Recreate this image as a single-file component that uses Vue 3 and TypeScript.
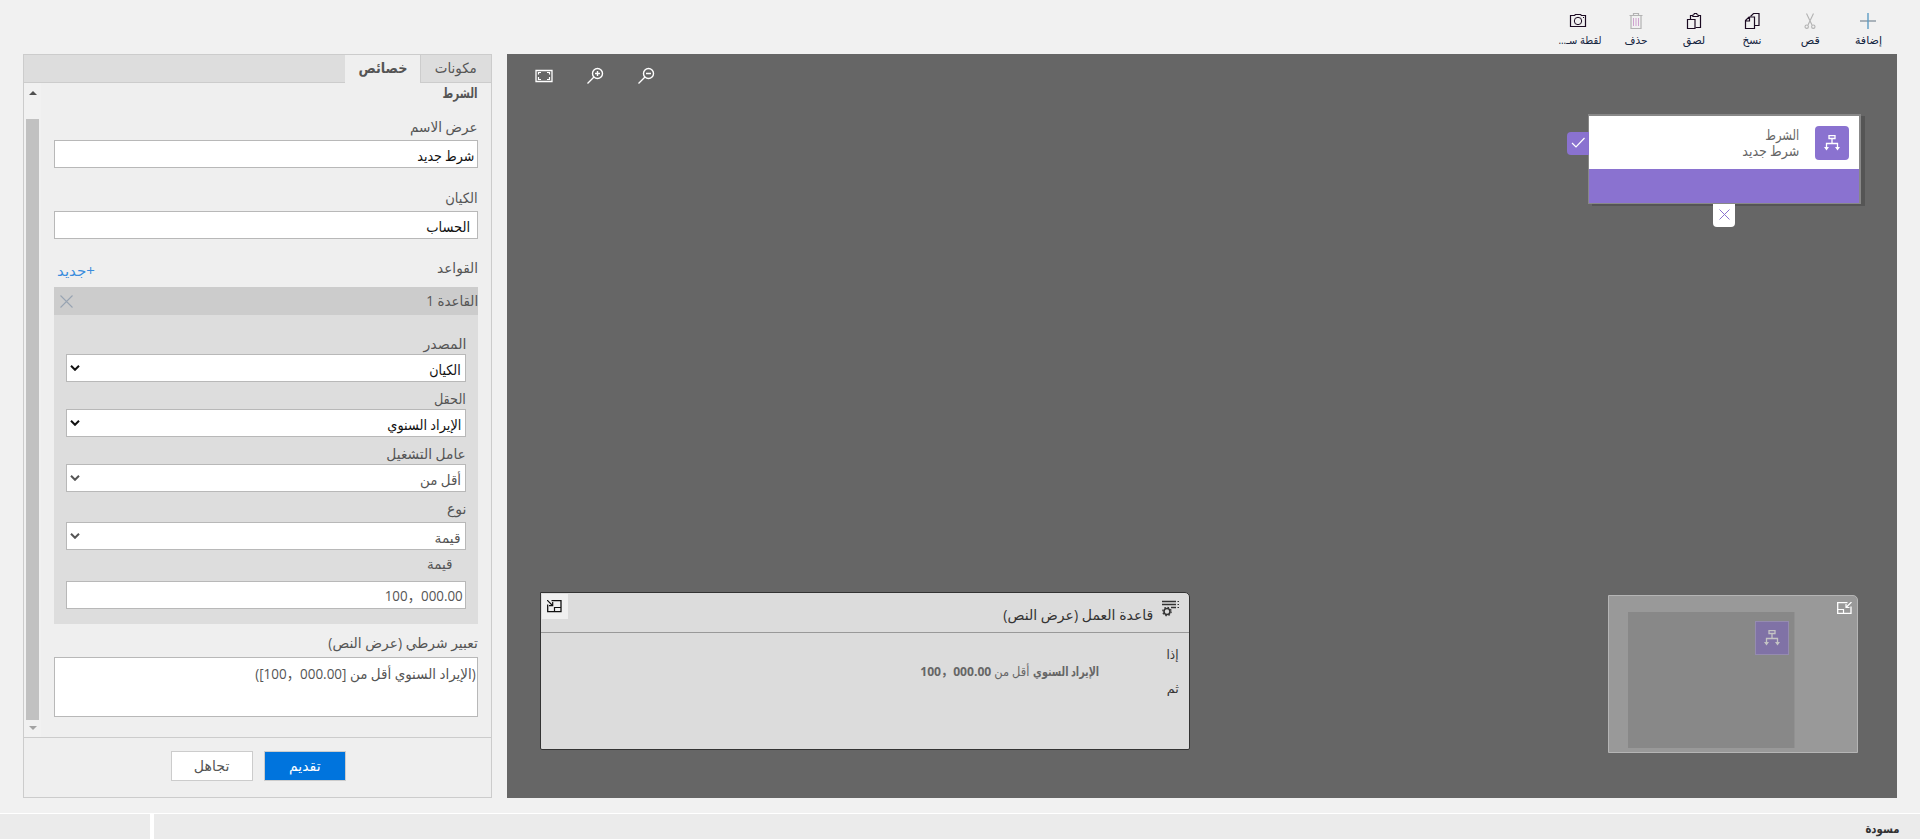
<script setup lang="ts">
import type { Directive } from 'vue'

/* Condenses or widens a label horizontally so that it takes the given width. */
const vFit: Directive<HTMLElement, number> = {
  mounted(el, { value }) {
    const width = el.getBoundingClientRect().width
    if (width > 0) el.style.transform = `scaleX(${(value / width).toFixed(4)})`
  },
}

interface Tool { label: string; icon: string; width: number }
const tools: Tool[] = [
  { label: 'إضافة', icon: 'add', width: 27 },
  { label: 'قص', icon: 'cut', width: 19 },
  { label: 'نسخ', icon: 'copy', width: 19 },
  { label: 'لصق', icon: 'paste', width: 22.5 },
  { label: 'حذف', icon: 'delete', width: 23 },
  { label: 'لقطة سـ...', icon: 'camera', width: 43 },
]

interface Select { label: string; labelWidth: number; value: string; width: number; muted: boolean }
const selects: Select[] = [
  { label: 'المصدر', labelWidth: 43, value: 'الكيان', width: 31.5, muted: false },
  { label: 'الحقل', labelWidth: 32, value: 'الإيراد السنوي', width: 74, muted: false },
  { label: 'عامل التشغيل', labelWidth: 79.5, value: 'أقل من', width: 41, muted: true },
  { label: 'نوع', labelWidth: 19.5, value: 'قيمة', width: 26, muted: true },
]
const amount = '100，000.00'
</script>

<template>
  <div class="app" dir="rtl">
    <header class="toolbar">
      <div v-for="t in tools" :key="t.icon" class="tool">
        <svg class="tool-icon" viewBox="0 0 18 18" fill="none">
          <g v-if="t.icon === 'add'">
            <path d="M1 9h16" stroke="#a9b2ba" stroke-width="2" />
            <path d="M9 1v16" stroke="#5d9cc4" stroke-width="1.4" />
          </g>
          <g v-else-if="t.icon === 'cut'" stroke="#b3b3b3" stroke-width="1.1">
            <path d="M5.5 1.5l5.5 11.5M12.5 1.5L7 13" />
            <circle cx="5.7" cy="14.7" r="1.7" /><circle cx="12.3" cy="14.7" r="1.7" />
          </g>
          <g v-else-if="t.icon === 'copy'" stroke="#1b0a22" stroke-width="1.2">
            <path d="M7.5 4.5l3-3h5.5v12h-4" />
            <path d="M2.500 8.500l3.500-3.500h5.500v11.500h-9zM6.500 5v4H2.500" />
          </g>
          <g v-else-if="t.icon === 'paste'" stroke="#1b0a22" stroke-width="1.2">
            <path d="M5.500 7.500v-4h2.500M13 3.500h2.500v12h-5" />
            <path d="M7.500 4.500h6v-1.500h-1.500v-1.500h-3v1.500h-1.500z" stroke-width="1" />
            <path d="M2.500 7.500h7.500v9h-7.500z" />
          </g>
          <g v-else-if="t.icon === 'delete'" stroke="#b3b3b3">
            <path d="M2.5 3.5h13M6.5 3.5v-2h5v2M4 3.5v13h10v-13" stroke-width="1.2" />
            <path d="M6.5 6v8M9 6v8M11.5 6v8" stroke="#cfa3cf" />
          </g>
          <g v-else stroke="#1b0a22">
            <path d="M1.5 3.500h4l1-1h5l1 1h4v11h-15z" stroke-width="1.200" /><circle cx="9" cy="9" r="3.700" />
            <path d="M14 5.500h1" />
          </g>
        </svg>
        <span v-fit="t.width" class="fit center tool-label" :class="t.icon">{{ t.label }}</span>
      </div>
    </header>

    <main class="main">
      <section class="canvas">
        <div class="zoom-tools">
          <svg width="18" height="16" viewBox="0 0 18 16" fill="none" stroke="#fff">
            <path d="M1 3.500h16v11H1z" stroke-width="1.300" /><path d="M6 5.500H3.500v2M3.500 10v2.500H6M12 5.500h2.500v2M14.500 10v2.500H12" stroke-width="1.200" />
          </svg>
          <svg width="18" height="18" viewBox="0 0 18 18" fill="none" stroke="#fff" stroke-width="1.400">
            <circle cx="11.500" cy="6.500" r="5" /><path d="M8 10l-6.500 6.500M9 6.500h5M11.500 4v5" />
          </svg>
          <svg width="18" height="18" viewBox="0 0 18 18" fill="none" stroke="#fff" stroke-width="1.400">
            <circle cx="11.500" cy="6.500" r="5" /><path d="M8 10l-6.500 6.500M9 6.500h5" />
          </svg>
        </div>

        <div class="node">
          <div class="node-head">
            <div class="node-icon">
              <svg width="16" height="16" viewBox="0 0 16 16" fill="none" stroke="#fff">
                <path d="M5 .5h6v3H5zM8 4v4.500M2.500 13V8.500h11V13" stroke-width="1.300" />
                <path d="M0 12h5l-2.500 3.500zM11 12h5l-2.500 3.500z" fill="#fff" stroke="none" />
              </svg>
            </div>
            <div class="node-text">
              <div><span v-fit="34" class="fit">الشرط</span></div>
              <div><span v-fit="57" class="fit">شرط جديد</span></div>
            </div>
          </div>
          <div class="node-body"></div>
          <div class="node-yes">
            <svg width="14" height="12" viewBox="0 0 14 12" fill="none" stroke="#fff" stroke-width="1.200"><path d="M1 6l4 4L13.500 1" /></svg>
          </div>
          <div class="node-no">
            <svg width="11" height="11" viewBox="0 0 11 11" stroke="#8a72d0"><path d="M.5.5l10 10M10.500.5l-10 10" /></svg>
          </div>
        </div>

        <div class="rule-view">
          <div class="rule-title">
            <svg class="rule-icon" width="18" height="18" viewBox="0 0 18 18" fill="none" stroke="#333">
              <path d="M0 2.500h14M0 5.500h14M9 8.500h5" stroke-width="1.300" />
              <path d="M15.500 2.500h1.500M15.500 5.500h1.500M15.500 8.500h1.500" stroke-width="1.200" />
              <circle cx="5" cy="12.500" r="3" stroke-width="1.600" />
              <circle cx="5" cy="12.500" r="4.200" stroke-width="1.200" stroke-dasharray="1.600 1.700" />
            </svg>
            <span v-fit="150" class="fit">قاعدة العمل (عرض النص)</span>
          </div>
          <div class="rule-text">
            <div class="rule-key"><span v-fit="12" class="fit">إذا</span></div>
            <div class="rule-clause">
              <div class="field-name"><b v-fit="66" class="fit">الإيراد السنوي</b></div>
              <div class="operator"><span v-fit="35" class="fit">أقل من</span></div>
              <div class="operand"><b v-fit="71" class="fit">{{ amount }}</b></div>
            </div>
            <div class="rule-key"><span v-fit="12" class="fit">ثم</span></div>
          </div>
          <div class="rule-min">
            <svg width="15" height="13" viewBox="0 0 15 13" fill="none" stroke="#111">
              <path d="M4.500.7h9.500v11H.7V4.500" stroke-width="1.300" /><path d="M7.500 11.500v-4h6.500M0 0l5.500 5.500M5.700 2v3.700H2" stroke-width="1.200" />
            </svg>
          </div>
        </div>

        <div class="minimap">
          <svg class="minimap-toggle" width="15" height="12" viewBox="0 0 15 12" fill="none" stroke="#fff">
            <path d="M10.500.7H.7v10.600h13.300V4.500" stroke-width="1.300" /><path d="M.5 7.500h6v4M14.500 0L9 5.500M9 2v3.500h3.500" stroke-width="1.200" />
          </svg>
          <div class="minimap-area">
            <div class="minimap-node">
              <svg width="16" height="16" viewBox="0 0 16 16" fill="none" stroke="#c4c4c4">
                <path d="M5 .5h6v3H5zM8 4v4.500M2.500 13V8.500h11V13" stroke-width="1.300" />
                <path d="M0 12h5l-2.500 3.500zM11 12h5l-2.500 3.500z" fill="#c4c4c4" stroke="none" />
              </svg>
            </div>
          </div>
        </div>
      </section>

      <aside class="panel">
        <nav class="tabs">
          <div class="tab"><span v-fit="42" class="fit">مكونات</span></div>
          <div class="tab active"><span v-fit="49" class="fit">خصائص</span></div>
          <div class="tab-rest"></div>
        </nav>
        <div class="scroller">
          <div class="form">
            <div class="row title"><b v-fit="35" class="fit">الشرط</b></div>
            <div class="row name-label"><span v-fit="67.5" class="fit">عرض الاسم</span></div>
            <div class="box name"><span v-fit="57" class="fit">شرط جديد</span></div>
            <div class="row entity-label"><span v-fit="32.5" class="fit">الكيان</span></div>
            <div class="box entity"><span v-fit="44" class="fit">الحساب</span></div>
            <div class="row rules-label">
              <span v-fit="41" class="fit">القواعد</span>
              <a v-fit="38" class="fit left new">+جديد</a>
            </div>
            <div class="rule">
              <div class="rule-head">
                <span v-fit="52" class="fit">القاعدة 1</span>
                <svg width="13" height="13" viewBox="0 0 13 13" stroke="#98a4b2" stroke-width="1.100"><path d="M.5.5l12 12M12.500.5l-12 12" /></svg>
              </div>
              <div class="rule-fields">
                <div v-for="s in selects" :key="s.label" class="field">
                  <div class="row"><span v-fit="s.labelWidth" class="fit">{{ s.label }}</span></div>
                  <div class="box select" :class="{ muted: s.muted }">
                    <span v-fit="s.width" class="fit">{{ s.value }}</span>
                    <svg width="10" height="6" viewBox="0 0 10 6" fill="none" stroke="currentColor" stroke-width="2"><path d="M1 .8l4 4 4-4" /></svg>
                  </div>
                </div>
                <div class="row value-label"><span v-fit="25.5" class="fit">قيمة</span></div>
                <div class="box value muted"><span v-fit="78" class="fit">{{ amount }}</span></div>
              </div>
            </div>
            <div class="row expr-label"><span v-fit="149.5" class="fit">تعبير شرطي (عرض النص)</span></div>
            <div class="box expr muted"><span v-fit="220.5" class="fit">(الإيراد السنوي أقل من [{{ amount }}])</span></div>
          </div>
          <div class="scrollbar">
            <div class="arrow up"></div>
            <div class="thumb"></div>
            <div class="arrow down"></div>
          </div>
        </div>
        <div class="actions">
          <button class="btn primary"><span v-fit="31.5" class="fit center">تقديم</span></button>
          <button class="btn"><span v-fit="35.5" class="fit center">تجاهل</span></button>
        </div>
      </aside>
    </main>

    <footer class="status">
      <div class="status-main"><b v-fit="34" class="fit">مسودة</b></div>
      <div class="status-side"></div>
    </footer>
  </div>
</template>

<style>
html, body { margin: 0; background: #f1f1f1; overflow: hidden; }
</style>

<style scoped>
* { box-sizing: border-box; }
.app {
  width: 1920px; height: 839px; display: flex; flex-direction: column;
  background: #f1f1f1; color: #555; overflow: hidden;
  font: 14px/18px "Open Sans", "DejaVu Sans", "Noto Sans CJK SC", sans-serif;
}
svg { display: block; flex: none; }
.fit { display: inline-block; white-space: nowrap; transform-origin: right center; flex: none; }
.fit.center { transform-origin: center; }
.fit.left { transform-origin: left center; }

.toolbar { height: 54px; display: flex; padding: 12px 23px 0 0; flex: none; }
.tool { width: 58px; display: flex; flex-direction: column; align-items: center; color: #14243f; }
.tool-icon { width: 18px; height: 18px; }
.tool-label { font-size: 11px; line-height: 14px; margin-top: 3px; }
.tool-label.camera { margin-right: -4px; }

.main { height: 744px; display: flex; padding: 0 23px; justify-content: space-between; flex: none; }
.canvas { width: 1390px; background: #666; position: relative; }
.zoom-tools { direction: ltr; display: flex; align-items: flex-start; gap: 33px; padding: 13px 0 0 28px; }

.node {
  position: absolute; left: 1081px; top: 60px; width: 273px; height: 90px;
  border: 1px solid #888; border-top-width: 2px; border-right-width: 2px; box-shadow: 4px 2px 0 #555;
}
.node-head { height: 53px; background: #fff; display: flex; align-items: center; padding-right: 10px; gap: 16px; }
.node-icon { width: 34px; height: 34px; border-radius: 4px; background: #8a72d0; display: flex; align-items: center; justify-content: center; }
.node-text { line-height: 16px; color: #666; }
.node-body { height: 34px; background: #8a72d0; }
.node-yes {
  position: absolute; left: -22px; top: 16px; width: 22px; height: 23px; background: #8a72d0;
  border-radius: 4px 0 0 4px; display: flex; align-items: center; justify-content: center; padding: 0 1px 2px 0;
}
.node-no {
  position: absolute; left: 124px; top: 88px; width: 22px; height: 23px; background: #fff;
  border-radius: 0 0 4px 4px; display: flex; align-items: center; justify-content: center; padding-bottom: 2px;
}

.rule-view {
  position: absolute; left: 33px; top: 538px; width: 650px; height: 158px;
  background: #dcdcdc; border: 1px solid #333; border-radius: 0 5px 2px 2px; color: #333;
}
.rule-title { height: 40px; border-bottom: 1px solid #999; display: flex; gap: 9px; padding: 6px 9px 0 0; }
.rule-title .fit { margin-top: 7px; }
.rule-text { padding: 13px 10px 0 0; font-size: 12.5px; line-height: 17px; }
.rule-clause { display: flex; padding-right: 80px; color: #666; }
.field-name { width: 70px; }
.operator { width: 38px; }
.operand { width: 71px; }
.rule-min { position: absolute; left: 1px; top: 1px; width: 26px; height: 25px; background: #f0f0f0; padding: 6px; }

.minimap {
  position: absolute; left: 1101px; top: 541px; width: 250px; height: 158px;
  background: #999; border: 1px solid #b5b5b5; border-radius: 0 5px 0 0; padding: 16px 62px 0 0;
}
.minimap-toggle { position: absolute; right: 5px; top: 6px; }
.minimap-area { width: 167px; height: 136px; background: #888; padding: 9px 5px; border-right: 1px solid #919191; }
.minimap-node { width: 34px; height: 34px; background: #8072a6; border: 1px solid #958bb0; display: flex; align-items: center; justify-content: center; }

.panel { width: 469px; border: 1px solid #ccc; background: #efefef; display: flex; flex-direction: column; }
.tabs { height: 28px; display: flex; flex: none; }
.tab { width: 71px; padding: 4px 14px 0 0; background: #ddd; border: solid #ccc; border-width: 0 0 1px 1px; }
.tab.active { width: 75px; padding-right: 13px; background: #efefef; border: 0; font-weight: 700; }
.tab-rest { flex: 1; background: #ddd; border-bottom: 1px solid #ccc; }
.scroller { height: 654px; display: flex; justify-content: space-between; }
.form { width: 437px; padding-right: 13px; }
.row { height: 18px; line-height: 16px; display: flex; }
.box { height: 28px; background: #fff; border: 1px solid #b8b8b8; display: flex; color: #111; line-height: 28px; }
.box.muted { color: #555; }
.title { margin-top: 2px; }
.name-label { margin-top: 16px; }
.name { margin-top: 3px; padding-right: 3px; line-height: 30px; }
.entity-label { margin-top: 22px; }
.entity { margin-top: 3px; padding-right: 7px; line-height: 29px; }
.rules-label { margin-top: 21px; justify-content: space-between; padding-left: 3px; }
.new { color: #3a8ddd; padding-top: 3px; }
.rule { margin-top: 9px; height: 337px; background: #ddd; }
.rule-head { height: 28px; background: #ccc; display: flex; justify-content: space-between; align-items: center; padding-left: 6px; }
.rule-fields { padding: 21px 12px 0; }
.field { height: 55px; }
.field:nth-child(4) { height: 58px; }
.field:nth-child(4) .box { margin-top: 3px; }
.select { padding: 0 4px 0 3px; justify-content: space-between; line-height: 29px; }
.select svg { margin-top: 10px; }
.value-label { margin-top: -3px; padding-right: 13px; }
.value { margin-top: 7px; padding-right: 2px; }
.expr-label { margin-top: 11px; }
.expr { margin-top: 4px; height: 60px; padding-right: 1px; line-height: 32px; }
.scrollbar { width: 17px; background: #f1f1f1; display: flex; flex-direction: column; padding: 8px 2px 0; }
.thumb { width: 13px; height: 601px; background: #c1c1c1; margin: 24px 0 6px; }
.arrow { width: 0; height: 0; border: 4px solid transparent; margin-left: 2px; margin-right: 2px; }
.up { border-top: 0; border-bottom-color: #505050; }
.down { border-bottom: 0; border-top-color: #a3a3a3; }
.actions { flex: 1; border-top: 1px solid #ccc; display: flex; gap: 11px; padding: 13px 145px 0 0; }
.btn { width: 82px; height: 30px; padding: 0; border: 1px solid #ccc; background: #fff; color: #555; font: inherit; }
.btn.primary { background: #0074dd; color: #fff; }

.status { margin-top: 15px; height: 26px; border-top: 1px solid #fff; background: #fff; display: flex; gap: 4px; }
.status-main { flex: 1; background: #ebebeb; padding: 6px 21px 0 0; color: #333; font-size: 12px; }
.status-side { width: 150px; background: #ebebeb; }
</style>
